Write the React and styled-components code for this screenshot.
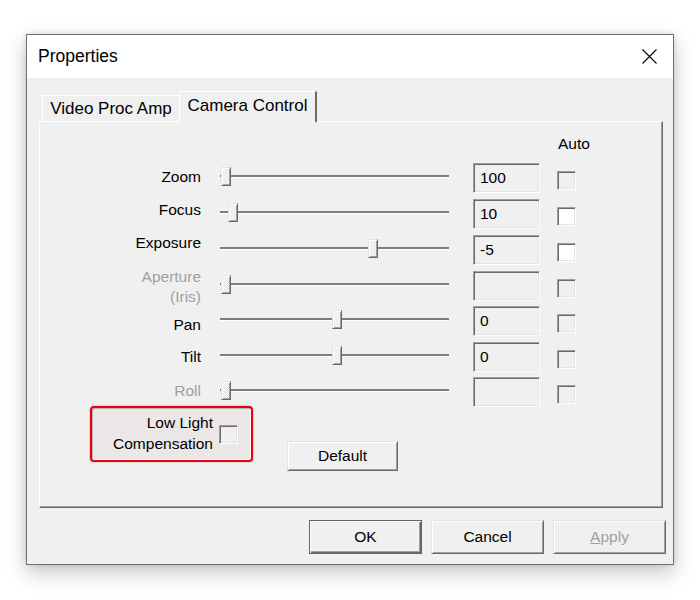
import React from "react";
import styled, { createGlobalStyle, css } from "styled-components";

const GlobalStyle = createGlobalStyle`
  body {
    margin: 0;
    background: #fff;
    font-family: "Liberation Sans", Arial, sans-serif;
    color: #000;
  }
`;

const sunken = css`
  border: 1px solid;
  border-color: #a0a0a0 #fff #fff #a0a0a0;
  box-shadow: inset 1px 1px 0 #696969, inset -1px -1px 0 #e3e3e3;
`;

const raised = css`
  border: 1px solid;
  border-color: #e3e3e3 #696969 #696969 #e3e3e3;
  box-shadow: inset 1px 1px 0 #fff, inset -1px -1px 0 #a0a0a0;
`;

const Page = styled.div`
  padding: 34px 0 30px 26px;
`;

const Window = styled.div`
  width: 648px;
  box-sizing: border-box;
  border: 1px solid #707070;
  background: #f0f0f0;
  box-shadow: 0 8px 20px rgba(0, 0, 0, 0.22), 0 0 6px rgba(0, 0, 0, 0.12);
`;

const TitleBar = styled.div`
  height: 43px;
  background: #fff;
  display: flex;
  align-items: center;
  justify-content: space-between;
  padding: 0 16px 0 11px;
  font-size: 17.5px;
`;

const Body = styled.div`
  padding: 13px 7px 10px 12px;
`;

const TabStrip = styled.div`
  display: flex;
  align-items: flex-end;
  height: 30px;
  padding-left: 3px;
`;

const Tab = styled.div`
  box-sizing: border-box;
  display: flex;
  align-items: center;
  justify-content: center;
  font-size: 17px;
  background: #f0f0f0;
  border-top: 1px solid #fff;
  border-left: 1px solid #fff;
  width: ${({ $active }) => ($active ? 138 : 137)}px;
  height: ${({ $active }) => ($active ? 31 : 26)}px;
  ${({ $active }) =>
    $active &&
    css`
      position: relative;
      z-index: 1;
      margin-bottom: -1px;
      border-right: 2px solid #696969;
      padding-bottom: 2px;
    `}
`;

const Panel = styled.div`
  box-sizing: border-box;
  width: 624px;
  height: 387px;
  border: 1px solid;
  border-color: #fff #696969 #696969 #fff;
  box-shadow: inset -1px -1px 0 #a0a0a0;
  padding-top: 12px;
`;

const Header = styled.div`
  padding-left: 518px;
  height: 20px;
  line-height: 20px;
  font-size: 15.5px;
  margin-bottom: 9px;
`;

const Row = styled.div`
  display: flex;
  align-items: flex-start;
  height: ${({ $h }) => $h}px;
`;

const Label = styled.div`
  width: 161px;
  flex: none;
  text-align: right;
  font-size: 15.5px;
  line-height: 20px;
  margin-top: ${({ $dy }) => $dy}px;
  color: ${({ $disabled }) => ($disabled ? "#a0a0a0" : "#000")};
`;

const SliderWrap = styled.div`
  position: relative;
  width: 229px;
  height: 19px;
  margin: 4px 0 0 19px;
  flex: none;
`;

const Track = styled.div`
  margin-top: 8px;
  height: 0;
  border-top: 2px solid #7d7d7d;
  border-bottom: 1px solid #fff;
`;

const Thumb = styled.div`
  position: absolute;
  top: 0;
  width: 10px;
  height: 19px;
  box-sizing: border-box;
  ${raised};
  background: ${({ $disabled }) =>
    $disabled
      ? "repeating-conic-gradient(#fff 0 25%, #dcdcdc 0 50%) 0 0 / 2px 2px"
      : "#f0f0f0"};
`;

const ValueBox = styled.div`
  box-sizing: border-box;
  width: 67px;
  height: 30px;
  margin-left: 24px;
  flex: none;
  ${sunken};
  background: #f0f0f0;
  font-size: 15.5px;
  line-height: 28px;
  padding-left: 6px;
`;

const Check = styled.div`
  box-sizing: border-box;
  width: 19px;
  height: 19px;
  flex: none;
  ${sunken};
  background: ${({ $enabled }) => ($enabled ? "#fff" : "#f0f0f0")};
  margin-left: ${({ $ml }) => $ml}px;
  margin-top: ${({ $mt }) => $mt}px;
`;

const LowRow = styled.div`
  display: flex;
  align-items: flex-start;
  margin-top: -1px;
`;

const Highlight = styled.div`
  box-sizing: border-box;
  width: 163px;
  height: 56px;
  margin-left: 50px;
  display: flex;
  justify-content: flex-end;
  align-items: flex-start;
  padding: 4px 13px 0 0;
  border: 2px solid #ee0010;
  border-radius: 4px;
  background: #ebe7e7;
  box-shadow: inset 1px 1px 0 #b4b4b4, inset -1px -1px 0 #fafafa,
    0 0 0 1px rgba(0, 0, 0, 0.1);
`;

const HighlightText = styled.div`
  text-align: right;
  font-size: 15.5px;
  line-height: 21px;
`;

const Button = styled.div`
  box-sizing: border-box;
  width: ${({ $w }) => $w}px;
  height: ${({ $h }) => $h}px;
  display: flex;
  align-items: center;
  justify-content: center;
  font-size: 15.5px;
  background: #f0f0f0;
  color: ${({ $disabled }) => ($disabled ? "#a0a0a0" : "#000")};
  ${raised};
  ${({ $default }) =>
    $default &&
    css`
      border: 1px solid #646464;
      box-shadow: inset 1px 1px 0 #fff, inset -1px -1px 0 #696969,
        inset -2px -2px 0 #a0a0a0;
    `}
`;

const DefaultButton = styled(Button)`
  margin: 35px 0 0 34px;
`;

const ButtonRow = styled.div`
  display: flex;
  justify-content: flex-end;
  gap: 9px;
  margin-top: 12px;
`;

const rows = [
  { label: "Zoom", value: "100", pos: 1, h: 36, dy: 4 },
  { label: "Focus", value: "10", pos: 8, h: 36, dy: 1, auto: true },
  { label: "Exposure", value: "-5", pos: 148, h: 36, dy: -2, auto: true },
  { label: ["Aperture", "(Iris)"], value: "", pos: 1, h: 35, dy: -4, disabled: true },
  { label: "Pan", value: "0", pos: 112, h: 36, dy: 9 },
  { label: "Tilt", value: "0", pos: 112, h: 35, dy: 5 },
  { label: "Roll", value: "", pos: 1, h: 30, dy: 4, disabled: true },
];

const CloseIcon = () => (
  <svg width="15" height="15" viewBox="0 0 15 15">
    <path d="M0.5 0.5L14.5 14.5M14.5 0.5L0.5 14.5" stroke="#000" strokeWidth="1.1" />
  </svg>
);

export default function App() {
  return (
    <Page>
      <GlobalStyle />
      <Window>
        <TitleBar>
          <span>Properties</span>
          <CloseIcon />
        </TitleBar>
        <Body>
          <TabStrip>
            <Tab>Video Proc Amp</Tab>
            <Tab $active>Camera Control</Tab>
          </TabStrip>
          <Panel>
            <Header>Auto</Header>
            {rows.map(r => (
              <Row key={r.value + String(r.label)} $h={r.h}>
                <Label $dy={r.dy} $disabled={r.disabled}>
                  {Array.isArray(r.label)
                    ? r.label.map(l => <div key={l}>{l}</div>)
                    : r.label}
                </Label>
                <SliderWrap>
                  <Track />
                  <Thumb $disabled={r.disabled} style={{ left: r.pos }} />
                </SliderWrap>
                <ValueBox>{r.value}</ValueBox>
                <Check $enabled={r.auto} $ml={17} $mt={8} />
              </Row>
            ))}
            <LowRow>
              <Highlight>
                <HighlightText>
                  <div>Low Light</div>
                  <div>Compensation</div>
                </HighlightText>
                <Check $ml={6} $mt={13} />
              </Highlight>
              <DefaultButton $w={111} $h={30}>
                Default
              </DefaultButton>
            </LowRow>
          </Panel>
          <ButtonRow>
            <Button $w={113} $h={34} $default>
              OK
            </Button>
            <Button $w={113} $h={34}>
              Cancel
            </Button>
            <Button $w={113} $h={34} $disabled>
              <span>
                <u>A</u>pply
              </span>
            </Button>
          </ButtonRow>
        </Body>
      </Window>
    </Page>
  );
}
